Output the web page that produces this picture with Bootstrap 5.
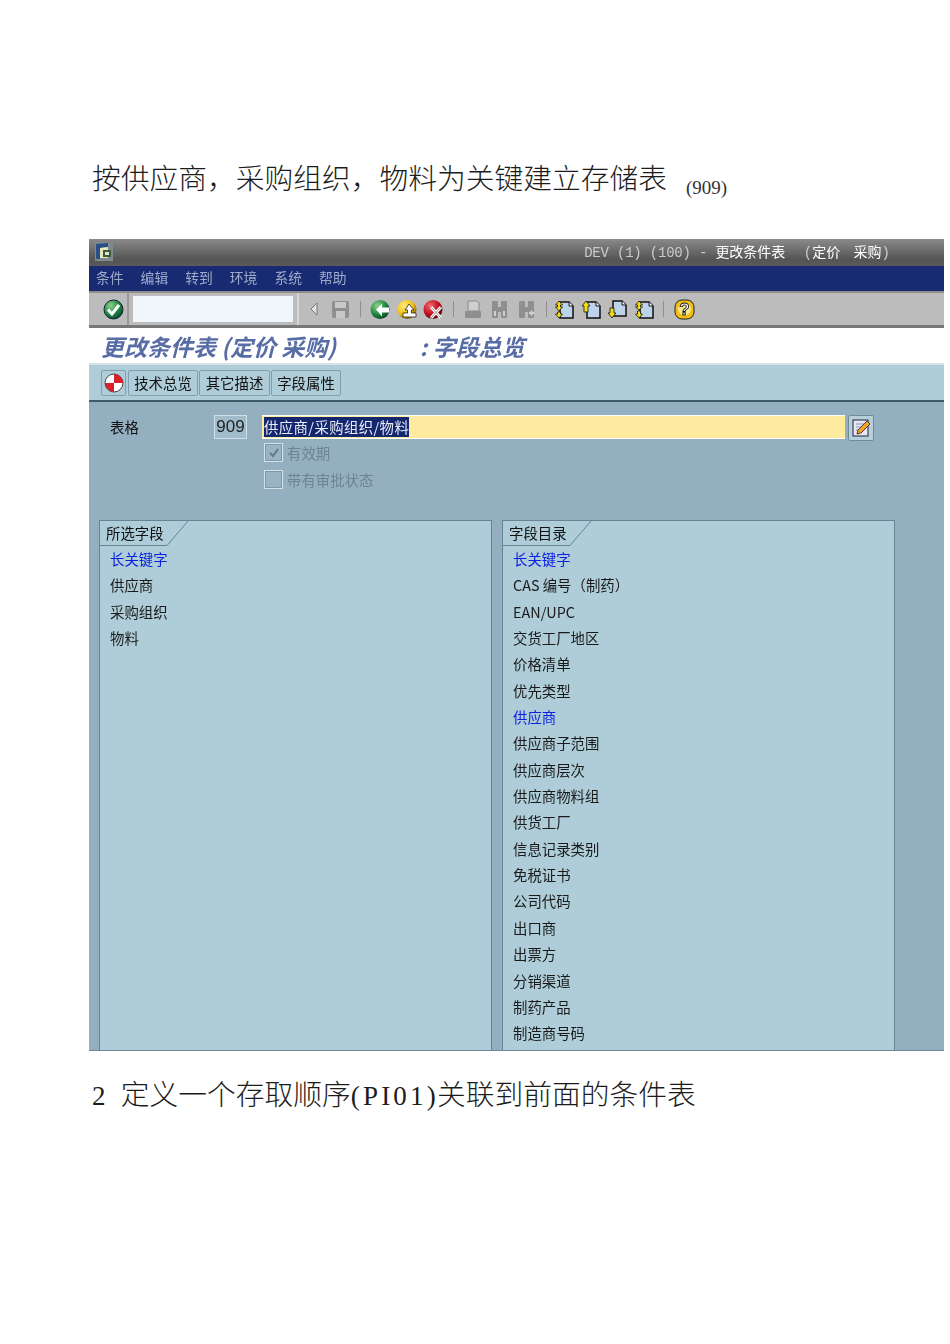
<!DOCTYPE html>
<html lang="zh-CN">
<head>
<meta charset="utf-8">
<title>存储表</title>
<link href="https://cdn.jsdelivr.net/npm/bootstrap@5.3.0/dist/css/bootstrap.min.css" rel="stylesheet">
<style>
html,body{background:#fff;margin:0;height:1344px;overflow:hidden}
.page-wrap{padding:157px 6px 0 89px;font-family:"Noto Sans CJK SC",sans-serif;color:#1c1c1c}
.doc-line{font-size:28.75px;line-height:40px;height:40px;padding-left:3px;white-space:nowrap;font-weight:300}
.doc-line-two{margin-top:22px}
.doc-mono{font-family:"Liberation Serif",serif;font-size:27px;letter-spacing:3.2px;display:inline-block}
.mono-one{width:28.75px}
.mono-six{width:86.25px}
.doc-sub{font-family:"Liberation Serif",serif;font-size:19px;margin-left:19px;position:relative;top:5px;color:#333}
.sap-win{margin-top:42px;height:812px;width:855px;overflow:hidden;background:#94afc0;font-size:14.4px;line-height:20px;border-bottom:1px solid #6f8a99;filter:blur(.4px)}
.sap-title{height:27px;background:linear-gradient(#8a8a8a,#555 75%,#5a5a5a);padding:0 54px 2px 6px;color:#cfd3d6}
.sap-title-text{font-family:"Liberation Mono",monospace;font-size:14px;color:#c8ccd0;white-space:nowrap}
.sap-title-text b{font-family:"Noto Sans CJK SC",sans-serif;font-weight:400;color:#fff}
.title-head{letter-spacing:-.2px}
.title-tail{word-spacing:5px;margin-left:5px}
.sap-menu{height:25px;background:#182a72;color:#9eabc9;padding:0 0 3px 7px;gap:17px;font-size:13.8px}
.sap-tools{height:37px;background:#bcbcbc;border-top:2px solid #8e8e8e;border-bottom:3px solid #777}
.slot-check{width:40px;border-right:2px solid #999;height:100%;padding-left:11px}
.sap-cmd{width:160px;height:26px;background:#eff7fd;margin:0 4px;border:0}
.tool-slot{width:26.5px;height:100%}
.tool-gap{width:1px;height:16px;background:#8f8f8f}
.tools-right{border-left:2px solid #d8d8d8;height:100%;padding-left:2px}
.tg-a{margin-left:6px}.ts-a{margin-left:6.5px}
.tg-b{margin-left:6px}.ts-b{margin-left:6px}
.tg-c{margin-left:6px}.ts-c{margin-left:5px}
.tg-d{margin-left:5.5px}.ts-d{margin-left:7px}
.sap-head{height:37px;background:#fff;border-bottom:2px solid #d6e2e8;padding-left:12px;color:#586ca6;font-size:23px;font-style:italic;font-weight:700;white-space:nowrap}
.sap-head span+span{margin-left:84px}
.sap-app{height:37px;background:#aecdd9;border-bottom:2px solid #3f5a68;padding-left:12px}
.sap-btn{height:26px;border:1px solid #7f9eae;border-radius:2px;background:#aecdd9;color:#111;white-space:nowrap;display:flex;align-items:center;justify-content:center;margin-left:1px}
.sap-btn-ico{width:25px;margin:0 1px 0 0}
.btn-w70{width:70px}.btn-w72{width:71px}.btn-w71{width:70px}
.sap-form{height:118px;padding:13px 0 0 21px}
.form-label-cell{width:104px;line-height:24px;color:#111}
.form-num{width:33px;height:24px;border:1px solid #cfe0e8;background:#a0bccb;color:#222;font-family:"Liberation Sans",sans-serif;font-size:17px;line-height:22px;text-align:center}
.form-desc{width:583px;height:24px;margin-left:15px;background:#feeb9f;border-bottom:1px solid #fff;border-top:1px solid #fff;padding-left:2px;line-height:22px}
.form-sel{background:#14266e;color:#e8ecf6;display:inline-block;height:20px;line-height:20px;margin-top:1px;width:145px;white-space:nowrap;letter-spacing:.4px}
.form-ed{width:26px;height:26px;margin-left:3px;border:1px solid #6f8a99;border-radius:2px;background:#b6cfdb}
.form-check-line{margin-left:154px;height:27px;color:#6d8494}
.check-first{margin-top:-2px}
.chk-box{width:19px;height:19px;border:1px solid #d5e2e9;background:#9ab4c3;margin-right:4px;outline:1px solid #7e98a7;outline-offset:-2px}
.panes{padding-left:10px;gap:10px}
.pane-box{width:393px;height:560px;background:#aecdd9;border:1px solid #668494}
.pane-tab{height:24px;position:relative;padding-left:6px;line-height:24px;color:#111;width:88px}
.pane-tab svg{position:absolute;left:0;top:0}
.pane-tab span{position:relative}
.pane-list{padding:1px 0 0 10px;margin:0;list-style:none}
.pane-list li{height:26.35px;line-height:26.35px;color:#1a1a1a;white-space:nowrap}
.pane-list li.key-row{color:#0a1fe0}
</style>
</head>
<body>
<div class="page-wrap">
  <div class="doc-line">按供应商，采购组织，物料为关键建立存储表<span class="doc-sub">(909)</span></div>

  <div class="sap-win">
    <svg width="0" height="0" class="d-block">
      <defs>
        <radialGradient id="gGreen" cx=".35" cy=".3" r=".8"><stop offset="0" stop-color="#8fd08a"/><stop offset=".55" stop-color="#1f8a45"/><stop offset="1" stop-color="#0b3a22"/></radialGradient>
        <radialGradient id="gYellow" cx=".35" cy=".3" r=".8"><stop offset="0" stop-color="#ffe97a"/><stop offset=".6" stop-color="#f0bf10"/><stop offset="1" stop-color="#5a4300"/></radialGradient>
        <radialGradient id="gRed" cx=".35" cy=".3" r=".8"><stop offset="0" stop-color="#f06a70"/><stop offset=".55" stop-color="#c3101f"/><stop offset="1" stop-color="#3a0508"/></radialGradient>
      </defs>
    </svg>
    <div class="sap-title d-flex align-items-center justify-content-between">
      <svg width="18" height="19" viewBox="0 0 18 19"><rect x="0" y="0" width="18" height="19" fill="#7d8a92"/><path d="M1 2 L13 1 V5 L5 6 V17 H1Z" fill="#2a4f86"/><path d="M5 6 L13 5 V16 H5Z" fill="#e6e8b8"/><rect x="8" y="8" width="8" height="7" fill="#3c5a3c"/><rect x="10" y="10" width="4" height="3" fill="#dfe6cf"/></svg>
      <span class="sap-title-text"><span class="title-head">DEV (1) (100) - </span><b>更改条件表</b><span class="title-tail"> (<b>定价</b> <b>采购</b>)</span></span>
    </div>
    <div class="sap-menu d-flex align-items-center"><span>条件</span><span>编辑</span><span>转到</span><span>环境</span><span>系统</span><span>帮助</span></div>

    <div class="sap-tools d-flex align-items-center">
      <div class="slot-check d-flex align-items-center justify-content-center">
        <svg width="21" height="21" viewBox="0 0 21 21"><circle cx="10.500" cy="10.500" r="9.500" fill="url(#gGreen)" stroke="#123"/><path d="M5 10.500l4 4.500 7-9" fill="none" stroke="#fff" stroke-width="3"/></svg>
      </div>
      <div class="sap-cmd"></div>
      <div class="tools-right d-flex align-items-center">
        <div class="tool-slot d-flex align-items-center justify-content-center"><svg width="12" height="16" viewBox="0 0 12 16"><path d="M9 2 L3 8 L9 14Z" fill="#e4e4e4" stroke="#777"/></svg></div>
        <div class="tool-slot d-flex align-items-center justify-content-center"><svg width="19" height="19" viewBox="0 0 19 19"><rect x="1" y="1" width="17" height="17" rx="2" fill="#8f8f8f"/><rect x="4" y="2" width="11" height="6" fill="#c8c8c8"/><rect x="5" y="11" width="9" height="7" fill="#c8c8c8"/></svg></div>
        <div class="tool-gap tg-a"></div>
        <div class="tool-slot ts-a d-flex align-items-center justify-content-center"><svg width="21" height="21" viewBox="0 0 21 21"><circle cx="10" cy="10.500" r="9.500" fill="url(#gGreen)"/><path d="M6 10.500l6-6v4h7v5h-7v4z" fill="#fff"/></svg></div>
        <div class="tool-slot d-flex align-items-center justify-content-center"><svg width="21" height="21" viewBox="0 0 21 21"><circle cx="10" cy="10.500" r="9.500" fill="url(#gYellow)"/><path d="M12 5l5 6h-2.500v3H19v4H6v-4h4.500v-3H8z" fill="#fff" stroke="#222" stroke-width=".8"/></svg></div>
        <div class="tool-slot d-flex align-items-center justify-content-center"><svg width="21" height="21" viewBox="0 0 21 21"><circle cx="10" cy="10.500" r="9.500" fill="url(#gRed)"/><path d="M8 8l10 11M18 8L8 19" stroke="#fff" stroke-width="3"/><path d="M8 8l10 11M18 8L8 19" stroke="#999" stroke-width="1"/></svg></div>
        <div class="tool-gap tg-b"></div>
        <div class="tool-slot ts-b d-flex align-items-center justify-content-center"><svg width="20" height="19" viewBox="0 0 20 19"><path d="M5 1h9l2 2v8H5z" fill="#cfcfcf" stroke="#8a8a8a"/><rect x="2" y="11" width="16" height="7" rx="1" fill="#8f8f8f"/></svg></div>
        <div class="tool-slot d-flex align-items-center justify-content-center"><svg width="19" height="19" viewBox="0 0 19 19"><rect x="2" y="1" width="6" height="17" rx="1" fill="#8f8f8f"/><rect x="11" y="1" width="6" height="17" rx="1" fill="#8f8f8f"/><rect x="6" y="7" width="7" height="5" fill="#8f8f8f"/><rect x="4" y="11" width="2" height="5" fill="#cfcfcf"/><rect x="13" y="11" width="2" height="5" fill="#cfcfcf"/></svg></div>
        <div class="tool-slot d-flex align-items-center justify-content-center"><svg width="19" height="19" viewBox="0 0 19 19"><rect x="2" y="1" width="6" height="17" rx="1" fill="#8f8f8f"/><rect x="11" y="1" width="6" height="17" rx="1" fill="#8f8f8f"/><rect x="6" y="7" width="7" height="5" fill="#8f8f8f"/><path d="M12 13h5M14.500 10.500v5" stroke="#cfcfcf" stroke-width="2"/></svg></div>
        <div class="tool-gap tg-c"></div>
        <div class="tool-slot ts-c d-flex align-items-center justify-content-center"><svg width="21" height="19" viewBox="0 0 21 19"><path d="M6 2h9l4 4v12H6z" fill="#bdd3ea" stroke="#111" stroke-width="1.500"/><path d="M15 2v4h4" fill="#fff" stroke="#111"/><path d="M5 1l3.500 4H6.500v2h2L5 11 1.500 7h2V5h-2z" fill="#f6dc12" stroke="#111" stroke-width=".8"/><path d="M5 18l-3.500-4h2v-2h3v2h2z" fill="#f6dc12" stroke="#111" stroke-width=".8"/></svg></div>
        <div class="tool-slot d-flex align-items-center justify-content-center"><svg width="21" height="19" viewBox="0 0 21 19"><path d="M6 2h9l4 4v12H6z" fill="#bdd3ea" stroke="#111" stroke-width="1.500"/><path d="M15 2v4h4" fill="#fff" stroke="#111"/><path d="M5 1l4 5H7v6H3V6H1z" fill="#f6dc12" stroke="#111" stroke-width=".8"/></svg></div>
        <div class="tool-slot d-flex align-items-center justify-content-center"><svg width="21" height="19" viewBox="0 0 21 19"><path d="M6 1h9l4 4v11H6z" fill="#bdd3ea" stroke="#111" stroke-width="1.500"/><path d="M15 1v4h4" fill="#fff" stroke="#111"/><path d="M5 18l4-5H7V8H3v5H1z" fill="#f6dc12" stroke="#111" stroke-width=".8"/></svg></div>
        <div class="tool-slot d-flex align-items-center justify-content-center"><svg width="21" height="19" viewBox="0 0 21 19"><path d="M6 2h9l4 4v12H6z" fill="#bdd3ea" stroke="#111" stroke-width="1.500"/><path d="M15 2v4h4" fill="#fff" stroke="#111"/><path d="M5 1l3.500 4H6.500v2h2L5 10 1.500 7h2V5h-2z" fill="#f6dc12" stroke="#111" stroke-width=".8"/><path d="M5 18l-3.500-4h2v-3h3v3h2z" fill="#f6dc12" stroke="#111" stroke-width=".8"/></svg></div>
        <div class="tool-gap tg-d"></div>
        <div class="tool-slot ts-d d-flex align-items-center justify-content-center"><svg width="21" height="21" viewBox="0 0 21 21"><rect x="1" y="1" width="19" height="19" rx="7" fill="#f0bd12" stroke="#222"/><circle cx="10.500" cy="10" r="6.500" fill="#f7e68a"/><text x="10.500" y="16" text-anchor="middle" font-family="Liberation Sans" font-weight="700" font-size="17" fill="#fff" stroke="#111" stroke-width=".9">?</text></svg></div>
      </div>
    </div>

    <div class="sap-head d-flex align-items-center"><span>更改条件表 (定价 采购)</span><span>: 字段总览</span></div>

    <div class="sap-app d-flex align-items-center">
      <div class="sap-btn sap-btn-ico"><svg width="20" height="20" viewBox="0 0 20 20"><circle cx="10" cy="10" r="9" fill="#fff" stroke="#444"/><path d="M10 1a9 9 0 0 1 9 9h-9zM10 19a9 9 0 0 1-9-9h9z" fill="#d81f2a"/></svg></div>
      <div class="sap-btn btn-w70">技术总览</div>
      <div class="sap-btn btn-w72">其它描述</div>
      <div class="sap-btn btn-w71">字段属性</div>
    </div>

    <div class="sap-form">
      <div class="d-flex align-items-start">
        <div class="form-label-cell">表格</div>
        <div class="form-num">909</div>
        <div class="form-desc"><span class="form-sel">供应商/采购组织/物料</span></div>
        <div class="form-ed d-flex align-items-center justify-content-center"><svg width="20" height="20" viewBox="0 0 20 20"><rect x="2" y="2" width="15" height="16" fill="#e4e8f4" stroke="#223"/><path d="M5 6h8M5 9h6M5 12h4" stroke="#8a93ad"/><path d="M6 16l1-4L16 3l3 3-9 9z" fill="#f0a424" stroke="#633"/></svg></div>
      </div>
      <div class="form-check-line check-first d-flex align-items-center"><span class="chk-box d-flex align-items-center justify-content-center"><svg width="12" height="12" viewBox="0 0 12 12"><path d="M2 6l3 3 5-7" fill="none" stroke="#5f7888" stroke-width="2"/></svg></span>有效期</div>
      <div class="form-check-line d-flex align-items-center"><span class="chk-box"></span>带有审批状态</div>
    </div>

    <div class="panes d-flex">
      <div class="pane-box">
        <div class="pane-tab"><svg width="90" height="25" viewBox="0 0 90 25"><path d="M0 24.500H67L88 0" fill="none" stroke="#668494"/></svg><span>所选字段</span></div>
        <ul class="pane-list">
          <li class="key-row">长关键字</li><li>供应商</li><li>采购组织</li><li>物料</li>
        </ul>
      </div>
      <div class="pane-box">
        <div class="pane-tab"><svg width="90" height="25" viewBox="0 0 90 25"><path d="M0 24.500H67L88 0" fill="none" stroke="#668494"/></svg><span>字段目录</span></div>
        <ul class="pane-list">
          <li class="key-row">长关键字</li><li>CAS 编号（制药）</li><li>EAN/UPC</li><li>交货工厂地区</li><li>价格清单</li><li>优先类型</li><li class="key-row">供应商</li><li>供应商子范围</li><li>供应商层次</li><li>供应商物料组</li><li>供货工厂</li><li>信息记录类别</li><li>免税证书</li><li>公司代码</li><li>出口商</li><li>出票方</li><li>分销渠道</li><li>制药产品</li><li>制造商号码</li>
        </ul>
      </div>
    </div>
  </div>

  <div class="doc-line doc-line-two"><span class="doc-mono mono-one">2</span>定义一个存取顺序<span class="doc-mono mono-six">(PI01)</span>关联到前面的条件表</div>
</div>
</body>
</html>
